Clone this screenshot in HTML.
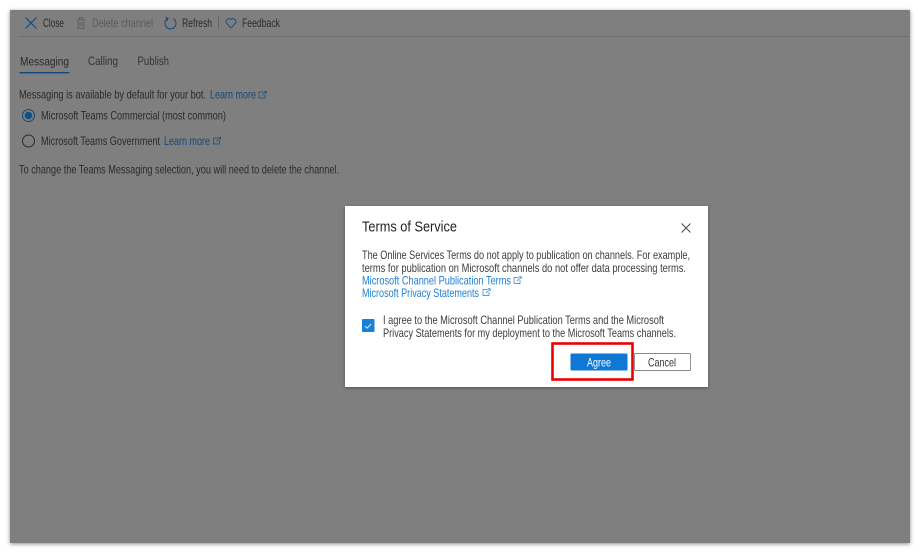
<!DOCTYPE html>
<html><head><meta charset="utf-8"><style>
html,body{margin:0;padding:0;background:#fff;width:920px;height:553px;overflow:hidden}
svg{display:block;position:absolute;left:0;top:0;filter:blur(.3px)}
text{font-family:"Liberation Sans",sans-serif;font-size:11.6px;fill:#2a2a2a}
.l{fill:#10487c}.d{fill:#5a5a5a}.b{fill:#1a7fd6}.t{fill:#333}
</style></head><body>
<div style="position:absolute;left:10px;top:10px;width:900px;height:533px;background:#7f7f7f;box-shadow:0 1px 4px rgba(0,0,0,.45)"></div>
<div style="position:absolute;left:345px;top:206px;width:363px;height:181px;background:#fff;box-shadow:0 1px 3px rgba(0,0,0,.35)"></div>
<svg width="920" height="553" viewBox="0 0 920 553">
<defs><g id="e" fill="none" stroke-width=".7"><path d="M5.5 1.5H1v6h6V4"/><path d="M4 5l4-4M5.8 .7H8.2V3"/></g></defs>
<rect x="19" y="36" width="891" height="1" fill="#6f6f6f"/>
<path d="M25.5 17.5l11 11M36.5 17.5l-11 11" stroke="#0d4a82" stroke-width="1.2" fill="none"/>
<text x="43" y="27" textLength="21" lengthAdjust="spacingAndGlyphs">Close</text>
<path d="M77 19.5h8M79.5 19v-1.5h3V19M78 20v8.5h6V20M80 22v4.5M82 22v4.5" stroke="#585858" stroke-width=".8" fill="none"/>
<text class="d" x="92" y="27" textLength="61" lengthAdjust="spacingAndGlyphs">Delete channel</text>
<path d="M173.3 18.6a5.5 5.5 0 1 1-5.6 0" stroke="#0d4a82" stroke-width="1" fill="none"/><path d="M165.5 17.2l2.5 1.4-1.4 2.4" stroke="#0d4a82" stroke-width=".9" fill="none"/>
<text x="182" y="27" textLength="30" lengthAdjust="spacingAndGlyphs">Refresh</text>
<rect x="218" y="16" width="1" height="13" fill="#666"/>
<path d="M231 28l-4.6-5a3 3 0 0 1 4.6-3.6a3 3 0 0 1 4.6 3.6z" stroke="#0d4a82" stroke-width=".9" fill="none"/>
<text x="242" y="27" textLength="38" lengthAdjust="spacingAndGlyphs">Feedback</text>
<text x="20" y="65.5" style="font-size:12.2px" textLength="49" lengthAdjust="spacingAndGlyphs">Messaging</text>
<text class="t" x="88" y="65" style="font-size:12.2px" textLength="30" lengthAdjust="spacingAndGlyphs">Calling</text>
<text class="t" x="137.5" y="65" style="font-size:12.2px" textLength="31.5" lengthAdjust="spacingAndGlyphs">Publish</text>
<rect x="19.5" y="72" width="50" height="1.4" fill="#10487c"/>
<text x="19" y="98.5" textLength="187" lengthAdjust="spacingAndGlyphs">Messaging is available by default for your bot.</text>
<text class="l" x="210" y="98.5" textLength="46" lengthAdjust="spacingAndGlyphs">Learn more</text>
<use href="#e" x="258" y="90.5" stroke="#10487c"/>
<circle cx="28.5" cy="115.5" r="6" fill="none" stroke="#10487c" stroke-width="1"/><circle cx="28.5" cy="115.5" r="3.8" fill="#0f4f8a"/>
<text x="41" y="119.5" textLength="185" lengthAdjust="spacingAndGlyphs">Microsoft Teams Commercial (most common)</text>
<circle cx="28.5" cy="141" r="6" fill="none" stroke="#2a2a2a" stroke-width="1"/>
<text x="41" y="145" textLength="119" lengthAdjust="spacingAndGlyphs">Microsoft Teams Government</text>
<text class="l" x="164" y="145" textLength="46" lengthAdjust="spacingAndGlyphs">Learn more</text>
<use href="#e" x="212.5" y="136.5" stroke="#10487c"/>
<text x="19" y="173.5" textLength="320" lengthAdjust="spacingAndGlyphs">To change the Teams Messaging selection, you will need to delete the channel.</text>
<text x="362" y="231.5" style="font-size:14.5px;fill:#222" textLength="95" lengthAdjust="spacingAndGlyphs">Terms of Service</text>
<path d="M681.5 223.5l9 9M690.5 223.5l-9 9" stroke="#444" stroke-width=".9" fill="none"/>
<text x="362" y="259" style="fill:#3c3c3c" textLength="328" lengthAdjust="spacingAndGlyphs">The Online Services Terms do not apply to publication on channels. For example,</text>
<text x="362" y="272" style="fill:#3c3c3c" textLength="324" lengthAdjust="spacingAndGlyphs">terms for publication on Microsoft channels do not offer data processing terms.</text>
<text class="b" x="362" y="284.5" textLength="149" lengthAdjust="spacingAndGlyphs">Microsoft Channel Publication Terms</text>
<use href="#e" x="513" y="276" stroke="#1a7fd6"/>
<text class="b" x="362" y="297" textLength="117" lengthAdjust="spacingAndGlyphs">Microsoft Privacy Statements</text>
<use href="#e" x="482" y="288" stroke="#1a7fd6"/>
<rect x="362" y="319" width="12.5" height="13" rx="1" fill="#1a7fd6"/>
<path d="M365 326l2.2 2.2 4-4.4" stroke="#fff" stroke-width=".8" fill="none"/>
<text x="383" y="324" style="fill:#3c3c3c" textLength="281" lengthAdjust="spacingAndGlyphs">I agree to the Microsoft Channel Publication Terms and the Microsoft</text>
<text x="383" y="337" style="fill:#3c3c3c" textLength="293" lengthAdjust="spacingAndGlyphs">Privacy Statements for my deployment to the Microsoft Teams channels.</text>
<rect x="552.5" y="343.5" width="80" height="36" fill="none" stroke="#ee0000" stroke-width="2.6"/>
<rect x="570.5" y="353.5" width="57" height="17" rx="1" fill="#0f78d4"/>
<text x="587" y="366.5" style="fill:#fff" textLength="24" lengthAdjust="spacingAndGlyphs">Agree</text>
<rect x="634.5" y="353.5" width="56" height="17" rx="1" fill="#fff" stroke="#8a8a8a" stroke-width=".9"/>
<text x="648" y="366.5" style="fill:#333" textLength="28" lengthAdjust="spacingAndGlyphs">Cancel</text>
</svg>
</body></html>
